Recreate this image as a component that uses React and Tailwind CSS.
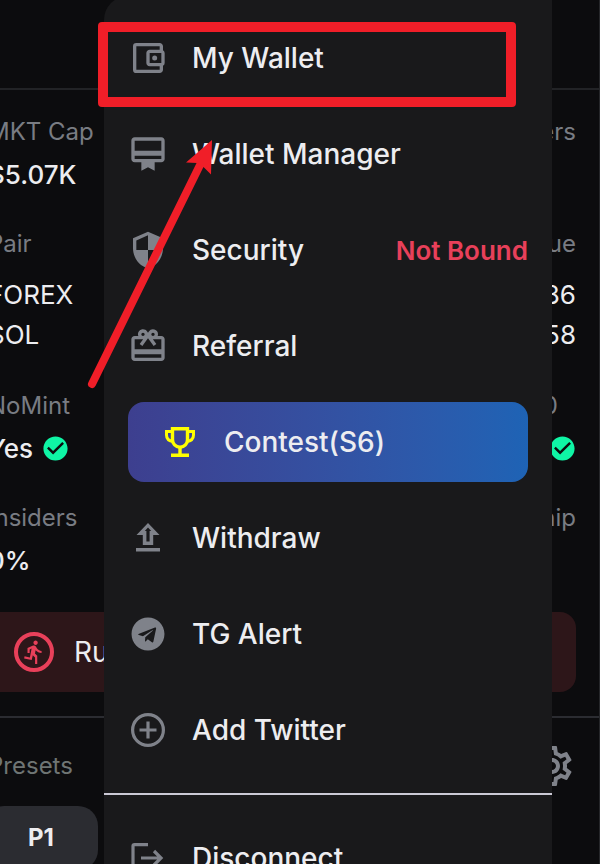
import {
  MdOutlineAccountBalanceWallet,
  MdCardMembership,
  MdSecurity,
  MdCardGiftcard,
  MdDirectionsRun,
  MdCheckCircle,
  MdOutlineSettings,
} from "react-icons/md";
import { FaTelegram } from "react-icons/fa";

function TrophyIcon() {
  return (
    <svg viewBox="0 0 40 40" className="size-10 shrink-0 text-[#ffff00]" fill="none" stroke="currentColor" strokeWidth="3.4" aria-hidden="true">
      <path d="M12.5 6.7h15v11c0 4-3 7.5-7.5 7.5s-7.5-3.500-7.5-7.500z" />
      <path d="M12.500 9.500H6.500v3.500c0 4 2.500 6 7 6.500M27.500 9.500h6v3.500c0 4-2.500 6-7 6.500" strokeWidth="3" />
      <path d="M20 25v9M11 33.300h18" />
    </svg>
  );
}

function WithdrawIcon() {
  return (
    <svg viewBox="0 0 40 40" className="size-10 shrink-0" fill="currentColor" aria-hidden="true">
      <path fillRule="evenodd" d="M20 5 31.500 17H25.200v10H14.800V17H8.500zM20 9.500l-3.200 3.500h1.600v10.500h3.200V13h1.600z" />
      <path d="M8 30h24v3.500H8z" />
    </svg>
  );
}

function PlusCircleIcon() {
  return (
    <svg viewBox="0 0 40 40" className="size-10 shrink-0" fill="none" stroke="currentColor" strokeWidth="3.200" aria-hidden="true">
      <circle cx="20" cy="20" r="15.400" />
      <path d="M20 11.500v17M11.500 20h17" />
    </svg>
  );
}

function LogoutIcon() {
  return (
    <svg viewBox="0 0 40 40" className="size-10 shrink-0" fill="none" stroke="currentColor" strokeWidth="3.200" aria-hidden="true">
      <path d="M20 6.600H6.500a1.500 1.500 0 0 0-1.500 1.500v23.800a1.500 1.500 0 0 0 1.500 1.500H20" />
      <path d="M13 20h20M26 13l7 7-7 7" />
    </svg>
  );
}

function MenuItem({ icon, label, note }) {
  return (
    <li>
      <button type="button" className="flex h-20 w-full items-center gap-6 text-left">
        <span className="flex size-10 shrink-0 items-center justify-center text-[#7f828a]">{icon}</span>
        <span className="grow whitespace-nowrap">{label}</span>
        {note && <span className="whitespace-nowrap text-[26px] font-semibold text-[#e8405a]">{note}</span>}
      </button>
    </li>
  );
}

function Menu() {
  return (
    <nav className="absolute -top-1 right-12 bottom-0 left-[104px] overflow-hidden rounded-tl-3xl bg-[#19191b] pt-[22px] text-[28px] font-medium text-[#ededf0]">
      <ul className="flex flex-col gap-4 px-6 pb-[23px]">
        <MenuItem icon={<MdOutlineAccountBalanceWallet className="size-10" />} label="My Wallet" />
        <MenuItem icon={<MdCardMembership className="size-10" />} label="Wallet Manager" />
        <MenuItem icon={<MdSecurity className="size-10" />} label="Security" note="Not Bound" />
        <MenuItem icon={<MdCardGiftcard className="size-10" />} label="Referral" />
        <li>
          <button type="button" className="flex h-20 w-full items-center gap-6 rounded-2xl bg-linear-to-r from-[#3d3f8f] to-[#1e63b5] px-8 text-left">
            <TrophyIcon />
            <span>Contest(S6)</span>
          </button>
        </li>
        <MenuItem icon={<WithdrawIcon />} label="Withdraw" />
        <MenuItem icon={<FaTelegram className="size-[34px]" />} label="TG Alert" />
        <MenuItem icon={<PlusCircleIcon />} label="Add Twitter" />
      </ul>
      <ul className="border-t-2 border-[#cbc9d5] px-6 pt-[23px]">
        <MenuItem icon={<LogoutIcon />} label="Disconnect" />
      </ul>
    </nav>
  );
}

function Stat({ label, children, right }) {
  return (
    <div className={right ? "flex flex-col items-end" : "flex flex-col items-start"}>
      <dt className="flex h-8 items-center text-[24px] font-normal text-[#797c83]">{label}</dt>
      {children}
    </div>
  );
}

function Check() {
  return (
    <span className="flex size-7 items-center justify-center">
      <MdCheckCircle className="size-[29px] shrink-0 text-[#0ff5a5]" />
    </span>
  );
}

function TokenPage() {
  return (
    <div className="-ml-3">
      <div className="h-[90px] border-b-2 border-[#222326]" />
      <dl className="pt-[26px] pr-6 text-[26px] font-medium text-[#ededf0]">
        <div className="flex h-[112px] justify-between">
          <Stat label="MKT Cap">
            <dd className="mt-1.5 flex h-10 items-center">$5.07K</dd>
          </Stat>
          <Stat label="Holders" right />
        </div>
        <div className="flex h-[162px] justify-between font-normal">
          <Stat label="Pair">
            <dd className="mt-3.5 flex h-10 items-center">FOREX</dd>
            <dd className="flex h-10 items-center">SOL</dd>
          </Stat>
          <Stat label="Value" right>
            <dd className="mt-3.5 flex h-10 items-center">86</dd>
            <dd className="flex h-10 items-center">58</dd>
          </Stat>
        </div>
        <div className="flex h-[112px] justify-between">
          <Stat label="NoMint">
            <dd className="mt-1.5 flex h-10 items-center gap-2">Yes <Check /></dd>
          </Stat>
          <Stat label={<span className="pr-[18px]">Top 10</span>} right>
            <dd className="mt-1.5 flex h-10 items-center"><Check /></dd>
          </Stat>
        </div>
        <div className="flex h-[110px] justify-between">
          <Stat label="Insiders">
            <dd className="mt-1.5 flex h-10 items-center">0%</dd>
          </Stat>
          <Stat label="Ownership" right />
        </div>
      </dl>
      <div className="pr-6">
        <button type="button" className="-ml-1 flex h-20 w-[calc(100%+4px)] items-center gap-5 rounded-2xl bg-[#2d1619] pl-[30px] text-[28px] text-[#ededf0]">
          <span className="flex size-10 items-center justify-center rounded-full border-4 border-[#e8405a] text-[#e8405a]">
            <MdDirectionsRun className="size-[26px]" />
          </span>
          Runner
        </button>
      </div>
      <div className="mt-6 border-t-2 border-[#2b2c31] pt-6 pr-6">
        <div className="flex h-12 items-center justify-between text-[24px] text-[#6f7574]">
          <span>Presets</span>
          <button type="button" aria-label="Settings" className="text-[#7f828a]">
            <MdOutlineSettings className="size-12" />
          </button>
        </div>
        <button type="button" className="mt-4 -ml-1 h-16 w-[114px] rounded-[20px] bg-[#2b2c31] text-[24px] font-bold text-[#ededf0]">
          P1
        </button>
      </div>
    </div>
  );
}

function Highlight() {
  return (
    <div className="pointer-events-none absolute inset-0" aria-hidden="true">
      <div className="absolute top-[22px] left-[98px] h-[85px] w-[418px] rounded border-[10px] border-[#f01e28]" />
      <svg viewBox="0 0 140 260" className="absolute top-[132px] left-20 h-[260px] w-[140px]">
        <path d="M12 252 120 33" stroke="#f01e28" strokeWidth="8" strokeLinecap="round" />
        <path d="m132 8-26 22.500 11 .5 7 4.500 7 7z" fill="#f01e28" />
      </svg>
    </div>
  );
}

export default function App() {
  return (
    <main className="relative h-screen overflow-hidden bg-[#0c0c0e] font-['Inter',sans-serif]">
      <TokenPage />
      <Menu />
      <div className="absolute inset-y-0 right-0 w-px bg-[#26272a]" />
      <Highlight />
    </main>
  );
}
